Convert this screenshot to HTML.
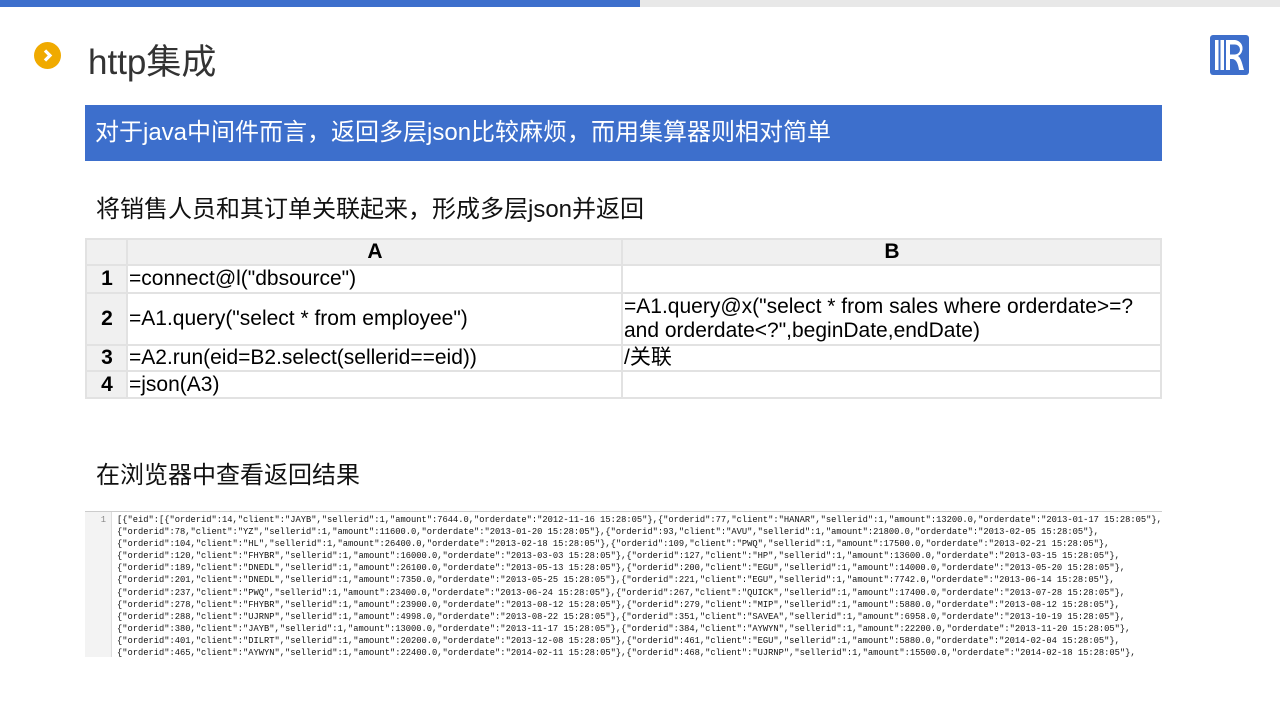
<!DOCTYPE html>
<html><head><meta charset="utf-8"><style>
*{margin:0;padding:0;box-sizing:border-box}
body{width:1280px;height:720px;background:#fff;position:relative;overflow:hidden;font-family:"Liberation Sans","Noto Sans CJK SC",sans-serif;color:#222}
.abs{position:absolute}
table{border-collapse:collapse;position:absolute;left:85px;top:238px;width:1077px;font-size:21px}
td{border:2px solid #e2e2e2;padding:0 0 0 1px;line-height:24px;color:#000}
td.h{background:#f0f0f0;text-align:center;font-weight:bold}
.json{position:absolute;left:85px;top:511px;width:1077px;height:146px;border-top:1px solid #ccc;overflow:hidden;font-family:"Liberation Mono",monospace;font-size:8.75px;line-height:12.1px;color:#111;white-space:pre}
.gut{position:absolute;left:0;top:0;width:27px;height:146px;background:#f3f3f3;border-right:1px solid #ddd;color:#888;text-align:right;padding-right:5px;padding-top:2px}
.code{position:absolute;left:32px;top:2px}
</style></head><body>
<div class="abs" style="left:0;top:0;width:640px;height:7px;background:#3d6fcc"></div>
<div class="abs" style="left:640px;top:0;width:640px;height:7px;background:#e8e8e8"></div>
<div class="abs" style="left:34px;top:42px;width:27px;height:27px;border-radius:50%;background:#f0aa00"></div>
<svg class="abs" style="left:34px;top:42px" width="27" height="27"><path d="M11 8.5 L16 13.5 L11 18.5" stroke="#fff" stroke-width="3.2" fill="none"/></svg>
<div class="abs" style="left:88px;top:34px;font-size:35px;color:#333">http集成</div>
<svg class="abs" style="left:1210px;top:35px" width="40" height="40" viewBox="0 0 40 40"><rect x="0" y="0" width="39" height="40" rx="3" fill="#3e6fcb"/><rect x="5" y="5" width="3.5" height="30" fill="#fff"/><rect x="10.5" y="5" width="3.5" height="30" fill="#fff"/><path d="M16 5 H25 A8.5 8.5 0 0 1 28 21 C31 23 32 28 34 35 H29 C28 28 26 24 22 24 H20 V35 H16 Z M20 9.5 V19.5 H25 A5 5 0 0 0 25 9.5 Z" fill="#fff" fill-rule="evenodd"/></svg>
<div class="abs" style="left:85px;top:105px;width:1077px;height:56px;background:#3d6fcc;color:#fff;font-size:24px;line-height:56px;padding-left:10px">对于java中间件而言，返回多层json比较麻烦，而用集算器则相对简单</div>
<div class="abs" style="left:96px;top:189px;font-size:24px;color:#111">将销售人员和其订单关联起来，形成多层json并返回</div>
<table>
<tr style="height:26px"><td class="h" style="width:41px"></td><td class="h" style="width:495px">A</td><td class="h">B</td></tr>
<tr style="height:28px"><td class="h">1</td><td>=connect@l("dbsource")</td><td></td></tr>
<tr style="height:52px"><td class="h">2</td><td>=A1.query("select * from employee")</td><td>=A1.query@x("select * from sales where orderdate&gt;=?<br>and orderdate&lt;?",beginDate,endDate)</td></tr>
<tr style="height:26px"><td class="h">3</td><td>=A2.run(eid=B2.select(sellerid==eid))</td><td>/关联</td></tr>
<tr style="height:27px"><td class="h">4</td><td>=json(A3)</td><td></td></tr>
</table>
<div class="abs" style="left:96px;top:455px;font-size:24px;color:#111">在浏览器中查看返回结果</div>
<div class="json"><div class="gut">1</div><div class="code">[{"eid":[{"orderid":14,"client":"JAYB","sellerid":1,"amount":7644.0,"orderdate":"2012-11-16 15:28:05"},{"orderid":77,"client":"HANAR","sellerid":1,"amount":13200.0,"orderdate":"2013-01-17 15:28:05"},
{"orderid":78,"client":"YZ","sellerid":1,"amount":11600.0,"orderdate":"2013-01-20 15:28:05"},{"orderid":93,"client":"AVU","sellerid":1,"amount":21800.0,"orderdate":"2013-02-05 15:28:05"},
{"orderid":104,"client":"HL","sellerid":1,"amount":26400.0,"orderdate":"2013-02-18 15:28:05"},{"orderid":109,"client":"PWQ","sellerid":1,"amount":17500.0,"orderdate":"2013-02-21 15:28:05"},
{"orderid":120,"client":"FHYBR","sellerid":1,"amount":16000.0,"orderdate":"2013-03-03 15:28:05"},{"orderid":127,"client":"HP","sellerid":1,"amount":13600.0,"orderdate":"2013-03-15 15:28:05"},
{"orderid":189,"client":"DNEDL","sellerid":1,"amount":26100.0,"orderdate":"2013-05-13 15:28:05"},{"orderid":200,"client":"EGU","sellerid":1,"amount":14000.0,"orderdate":"2013-05-20 15:28:05"},
{"orderid":201,"client":"DNEDL","sellerid":1,"amount":7350.0,"orderdate":"2013-05-25 15:28:05"},{"orderid":221,"client":"EGU","sellerid":1,"amount":7742.0,"orderdate":"2013-06-14 15:28:05"},
{"orderid":237,"client":"PWQ","sellerid":1,"amount":23400.0,"orderdate":"2013-06-24 15:28:05"},{"orderid":267,"client":"QUICK","sellerid":1,"amount":17400.0,"orderdate":"2013-07-28 15:28:05"},
{"orderid":278,"client":"FHYBR","sellerid":1,"amount":23900.0,"orderdate":"2013-08-12 15:28:05"},{"orderid":279,"client":"MIP","sellerid":1,"amount":5880.0,"orderdate":"2013-08-12 15:28:05"},
{"orderid":288,"client":"UJRNP","sellerid":1,"amount":4998.0,"orderdate":"2013-08-22 15:28:05"},{"orderid":351,"client":"SAVEA","sellerid":1,"amount":6958.0,"orderdate":"2013-10-19 15:28:05"},
{"orderid":380,"client":"JAYB","sellerid":1,"amount":13000.0,"orderdate":"2013-11-17 15:28:05"},{"orderid":384,"client":"AYWYN","sellerid":1,"amount":22200.0,"orderdate":"2013-11-20 15:28:05"},
{"orderid":401,"client":"DILRT","sellerid":1,"amount":20200.0,"orderdate":"2013-12-08 15:28:05"},{"orderid":461,"client":"EGU","sellerid":1,"amount":5880.0,"orderdate":"2014-02-04 15:28:05"},
{"orderid":465,"client":"AYWYN","sellerid":1,"amount":22400.0,"orderdate":"2014-02-11 15:28:05"},{"orderid":468,"client":"UJRNP","sellerid":1,"amount":15500.0,"orderdate":"2014-02-18 15:28:05"},</div></div>
</body></html>
